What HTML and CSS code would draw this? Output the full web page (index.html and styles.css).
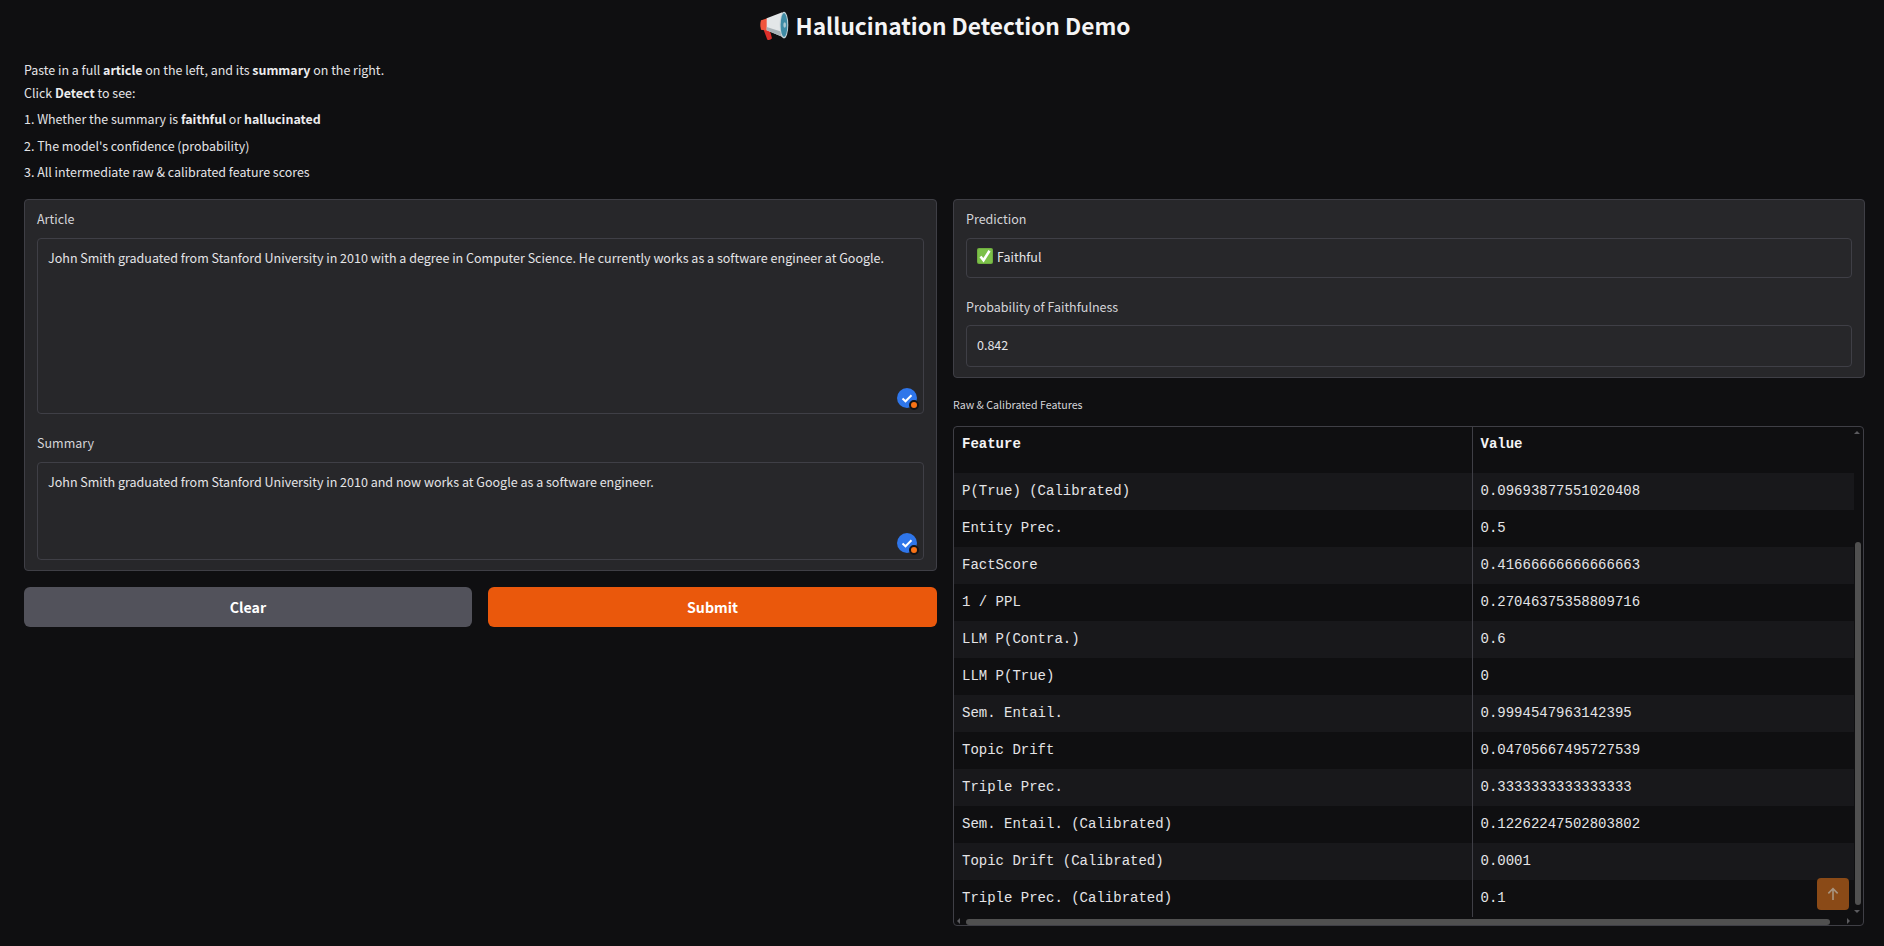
FILE: index.html
```html
<!DOCTYPE html>
<html lang="en">
<head>
<meta charset="utf-8">
<title>Hallucination Detection Demo</title>
<link rel="stylesheet" href="styles.css">
</head>
<body>
<main class="app">
  <h1 class="title">
    <svg class="mega" viewBox="27 18 90 90" aria-hidden="true">
      <path d="M40 72L58 70 66 100Q60 107 52 104Z" fill="#dc2f2a"/>
      <path d="M33 46Q29 60 33 74L52 77 52 40Z" fill="#f0553c"/>
      <path d="M50 40L97 22 100 97 50 76Z" fill="#e3e6e8"/>
      <path d="M50 66L100 82 100 97 50 76Z" fill="#a9b2b7"/>
      <ellipse cx="102" cy="60" rx="13" ry="40" fill="#c5d3d8"/>
      <ellipse cx="102" cy="60" rx="10" ry="36" fill="#3f8ba5"/>
      <ellipse cx="104" cy="60" rx="4" ry="8" fill="#a8c8d2"/>
    </svg>
    <span>Hallucination Detection Demo</span>
  </h1>
  <section class="intro">
    <p>Paste in a full <strong>article</strong> on the left, and its <strong>summary</strong> on the right.</p>
    <p>Click <strong>Detect</strong> to see:</p>
    <ol>
      <li>1. Whether the summary is <strong>faithful</strong> or <strong>hallucinated</strong></li>
      <li>2. The model's confidence (probability)</li>
      <li>3. All intermediate raw &amp; calibrated feature scores</li>
    </ol>
  </section>
  <div class="columns">
    <div class="col">
      <div class="panel panel-inputs">
        <div class="field">
          <label class="label">Article</label>
          <div class="box box-article">John Smith graduated from Stanford University in 2010 with a degree in Computer Science. He currently works as a software engineer at Google.
            <span class="badge"><svg viewBox="0 0 20 20"><path d="M5.500 10.500l3 2.800 6-6" fill="none" stroke="#fff" stroke-width="2"/></svg><i class="dot"></i></span>
          </div>
        </div>
        <div class="field">
          <label class="label">Summary</label>
          <div class="box box-summary">John Smith graduated from Stanford University in 2010 and now works at Google as a software engineer.
            <span class="badge"><svg viewBox="0 0 20 20"><path d="M5.500 10.500l3 2.800 6-6" fill="none" stroke="#fff" stroke-width="2"/></svg><i class="dot"></i></span>
          </div>
        </div>
      </div>
      <div class="actions">
        <button class="btn btn-clear">Clear</button>
        <button class="btn btn-submit">Submit</button>
      </div>
    </div>
    <div class="col">
      <div class="panel panel-output">
        <div class="field">
          <label class="label">Prediction</label>
          <div class="box box-line">
            <svg class="tick" viewBox="0 0 16 16" aria-hidden="true"><rect width="16" height="16" rx="2" fill="#6fae3f"/><rect x="1" y="1" width="14" height="14" rx="1.500" fill="#7cc04a"/><path d="M3.500 8.500l3 3.800L12.500 2.800" fill="none" stroke="#fff" stroke-width="2.600"/></svg>
            <span>Faithful</span>
          </div>
        </div>
        <div class="field">
          <label class="label label-low">Probability of Faithfulness</label>
          <div class="box box-num">0.842</div>
        </div>
      </div>
      <div class="table-label">Raw &amp; Calibrated Features</div>
      <div class="table-wrap">
        <table class="features">
          <thead><tr><th class="c1">Feature</th><th>Value</th></tr></thead>
          <tbody>
            <tr><td class="c1">P(True) (Calibrated)</td><td>0.09693877551020408</td></tr>
            <tr><td class="c1">Entity Prec.</td><td>0.5</td></tr>
            <tr><td class="c1">FactScore</td><td>0.41666666666666663</td></tr>
            <tr><td class="c1">1 / PPL</td><td>0.27046375358809716</td></tr>
            <tr><td class="c1">LLM P(Contra.)</td><td>0.6</td></tr>
            <tr><td class="c1">LLM P(True)</td><td>0</td></tr>
            <tr><td class="c1">Sem. Entail.</td><td>0.9994547963142395</td></tr>
            <tr><td class="c1">Topic Drift</td><td>0.04705667495727539</td></tr>
            <tr><td class="c1">Triple Prec.</td><td>0.3333333333333333</td></tr>
            <tr><td class="c1">Sem. Entail. (Calibrated)</td><td>0.12262247502803802</td></tr>
            <tr><td class="c1">Topic Drift (Calibrated)</td><td>0.0001</td></tr>
            <tr><td class="c1">Triple Prec. (Calibrated)</td><td>0.1</td></tr>
          </tbody>
        </table>
        <i class="arrow arrow-up"></i>
        <i class="arrow arrow-down"></i>
        <i class="arrow arrow-left"></i>
        <i class="arrow arrow-right"></i>
        <i class="thumb thumb-v"></i>
        <i class="thumb thumb-h"></i>
      </div>
    </div>
  </div>
</main>
<button class="to-top" aria-label="Back to top">
  <svg viewBox="0 0 12 12"><path d="M6 10.500V2M2.500 5.500L6 2l3.500 3.500" fill="none" stroke="#a8947f" stroke-width="1.200"/></svg>
</button>
</body>
</html>
```
FILE: styles.css
```css
* { box-sizing: border-box; }
html, body { margin: 0; height: 946px; overflow: hidden; }
body {
  background: #0f0f11;
  color: #e4e4e7;
  font-family: "Noto Sans CJK SC", "Noto Sans", sans-serif;
  font-size: 12.520px;
}
.app { padding: 0 19px 0 24px; }
.title {
  margin: 0;
  height: 52px;
  display: flex;
  align-items: center;
  justify-content: center;
  gap: 7px;
  font-size: 22.700px;
  font-weight: 700;
  color: #f4f4f5;
  line-height: 1;
}
.mega { width: 30px; height: 30px; }
.intro { height: 147px; padding-top: 8px; line-height: 21px; font-size: 12.450px; }
.intro p { margin: 0 0 1.500px; }
.intro ol { list-style: none; margin: 0; padding: 4px 0 0; }
.intro li { height: 26.500px; }
.intro strong { font-weight: 700; color: #ececee; }
.columns { display: grid; grid-template-columns: 913px 912px; gap: 16px; }
.panel {
  background: #27272a;
  border: 1px solid #3f3f46;
  border-radius: 4px;
  padding: 0 12px;
}
.panel-inputs { height: 372px; }
.panel-output { height: 179px; }
.field { display: block; }
.label {
  display: block;
  height: 38px;
  padding-top: 8px;
  line-height: 21px;
  color: #d4d4d8;
}
.label-low { padding-top: 9px; }
.box {
  position: relative;
  background: #27272a;
  border: 1px solid #3f3f46;
  border-radius: 4px;
  padding: 8px 10px;
  line-height: 21px;
  color: #e4e4e7;
}
.box-article { height: 176px; margin-bottom: 10px; }
.box-summary { height: 98px; }
.box-line { height: 40px; display: flex; align-items: center; gap: 4px; padding: 0 10px 4px; margin-bottom: 9px; }
.box-num { height: 42px; padding: 8px 10px; }
.tick { width: 16px; height: 16px; }
.badge {
  position: absolute;
  right: 6px;
  bottom: 5px;
  width: 20px;
  height: 20px;
  border-radius: 50%;
  background: #2f76ea;
}
.box-summary .badge { bottom: 6px; }
.badge svg { display: block; width: 20px; height: 20px; }
.dot {
  position: absolute;
  right: -2px;
  bottom: -2px;
  width: 10px;
  height: 10px;
  border-radius: 50%;
  background: #f97316;
  border: 2px solid #131316;
}
.actions { display: grid; grid-template-columns: 448px 449px; gap: 16px; margin-top: 16px; }
.btn {
  height: 40px;
  border: 0;
  border-radius: 6px;
  color: #fff;
  font-family: inherit;
  font-size: 14.200px;
  font-weight: 700;
}
.btn-clear { background: #52525b; }
.btn-submit { background: #ea580c; }
.table-label { height: 48px; padding-top: 18px; font-size: 10.650px; line-height: 18px; color: #d4d4d8; }
.table-wrap {
  position: relative;
  width: 911px;
  height: 500px;
  border: 1px solid #3f3f46;
  border-radius: 4px;
  overflow: hidden;
}
.features {
  width: 900px;
  border-collapse: collapse;
  table-layout: fixed;
  font-family: "Liberation Mono", monospace;
  font-size: 14px;
  color: #e4e4e7;
}
.features th, .features td {
  text-align: left;
  padding: 0 8px 2px;
  height: 37px;
  white-space: nowrap;
}
.features th { height: 46px; padding-bottom: 12px; font-weight: 700; color: #f4f4f5; }
.c1 { width: 518px; border-right: 1px solid #3f3f46; }
.features tbody tr:nth-child(odd) { background: #18181b; }
.arrow { position: absolute; width: 0; height: 0; border-style: solid; border-color: transparent; }
.arrow-up { top: 4px; right: 3px; border-width: 0 3px 3px; border-bottom-color: #5a5a5e; }
.arrow-down { bottom: 12px; right: 3px; border-width: 3px 3px 0; border-top-color: #5a5a5e; }
.arrow-left { bottom: 1px; left: 3px; border-width: 3px 3px 3px 0; border-right-color: #5a5a5e; }
.arrow-right { bottom: 1px; right: 13px; border-width: 3px 0 3px 3px; border-left-color: #5a5a5e; }
.thumb { position: absolute; background: #505050; border-radius: 3px; }
.thumb-v { top: 115px; bottom: 20px; right: 2px; width: 6px; }
.thumb-h { bottom: 0; left: 12px; width: 864px; height: 6px; }
.to-top {
  position: fixed;
  left: 1817px;
  top: 878px;
  width: 32px;
  height: 32px;
  padding: 8px;
  border: 0;
  border-radius: 4px;
  background: #8a4a17;
}
.to-top svg { display: block; width: 16px; height: 16px; }
```
